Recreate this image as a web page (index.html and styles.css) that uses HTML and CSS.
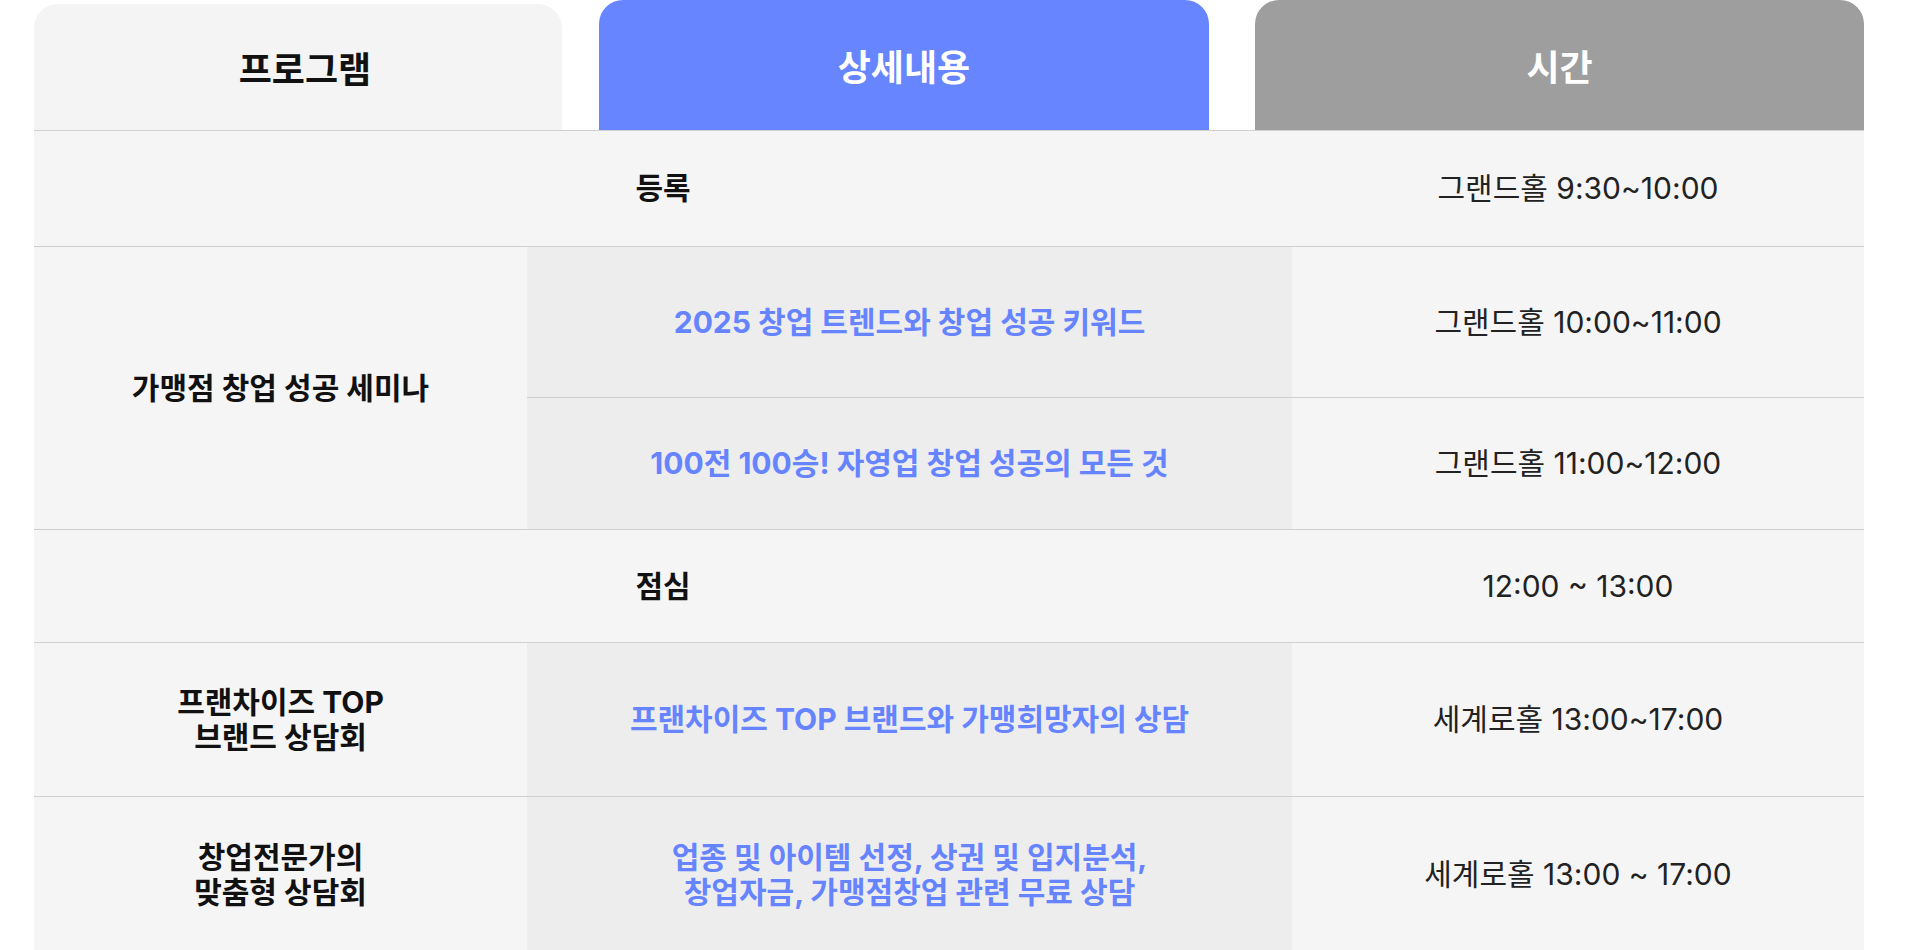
FILE: index.html
```html
<!DOCTYPE html>
<html lang="ko">
<head>
  <meta charset="UTF-8" />
  <title>프로그램 일정</title>
  <link rel="stylesheet" href="styles.css">
</head>
<body>

  <div class="schedule">
    <div class="tabs">
      <div class="tab tab-program">프로그램</div>
      <div class="tab tab-detail">상세내용</div>
      <div class="tab tab-time">시간</div>
    </div>

    <div class="grid">
      <div class="cell span-2 title row-reg">등록</div>
      <div class="cell time">그랜드홀 9:30~10:00</div>

      <div class="cell title span-rows">가맹점 창업 성공 세미나</div>
      <div class="cell detail">2025 창업 트렌드와 창업 성공 키워드</div>
      <div class="cell time">그랜드홀 10:00~11:00</div>
      <div class="cell detail">100전 100승! 자영업 창업 성공의 모든 것</div>
      <div class="cell time">그랜드홀 11:00~12:00</div>

      <div class="cell span-2 title">점심</div>
      <div class="cell time">12:00 ~ 13:00</div>

      <div class="cell title">프랜차이즈 TOP<br>브랜드 상담회</div>
      <div class="cell detail">프랜차이즈 TOP 브랜드와 가맹희망자의 상담</div>
      <div class="cell time">세계로홀 13:00~17:00</div>

      <div class="cell title">창업전문가의<br>맞춤형 상담회</div>
      <div class="cell detail">업종 및 아이템 선정, 상권 및 입지분석,<br>창업자금, 가맹점창업 관련 무료 상담</div>
      <div class="cell time">세계로홀 13:00 ~ 17:00</div>
    </div>
  </div>

</body>
</html>
```

FILE: styles.css
```css
body {
  margin: 0;
  background: #fff;
  font-family: Inter, "Noto Sans CJK KR", sans-serif;
  overflow: hidden;
}

.schedule {
  width: 1830px;
  margin-left: 34px;
}

/* header tabs */
.tabs {
  display: flex;
  align-items: flex-end;
  height: 130px;
}
.tab {
  display: flex;
  align-items: center;
  justify-content: center;
  height: 130px;
  border-radius: 24px 24px 0 0;
  font-size: 36px;
  font-weight: 700;
  color: #fff;
}
.tab-program {
  width: 514px;
  height: 126px;
  padding-left: 14px;
  background: #f4f4f4;
  color: #111;
}
.tab-detail {
  width: 610px;
  margin-left: 37px;
  background: #6685ff;
}
.tab-time {
  width: 609px;
  margin-left: 46px;
  background: #9e9e9e;
}

/* table body */
.grid {
  display: grid;
  grid-template-columns: 493px 765px 572px;
  grid-template-rows: 116px 151px 132px 113px 154px 156px;
}
.cell {
  display: flex;
  align-items: center;
  justify-content: center;
  text-align: center;
  background: #f5f5f5;
  border-top: 1px solid #d0d0d0;
  line-height: 35px;
}
.span-2 {
  grid-column: span 2;
}
.span-rows {
  grid-row: span 2;
}
.title {
  font-size: 30px;
  font-weight: 700;
  color: #111;
}
.detail {
  background: #ededed;
  font-size: 30px;
  font-weight: 700;
  color: #6684ff;
}
.time {
  font-size: 30px;
  font-weight: 400;
  color: #222;
}
```
